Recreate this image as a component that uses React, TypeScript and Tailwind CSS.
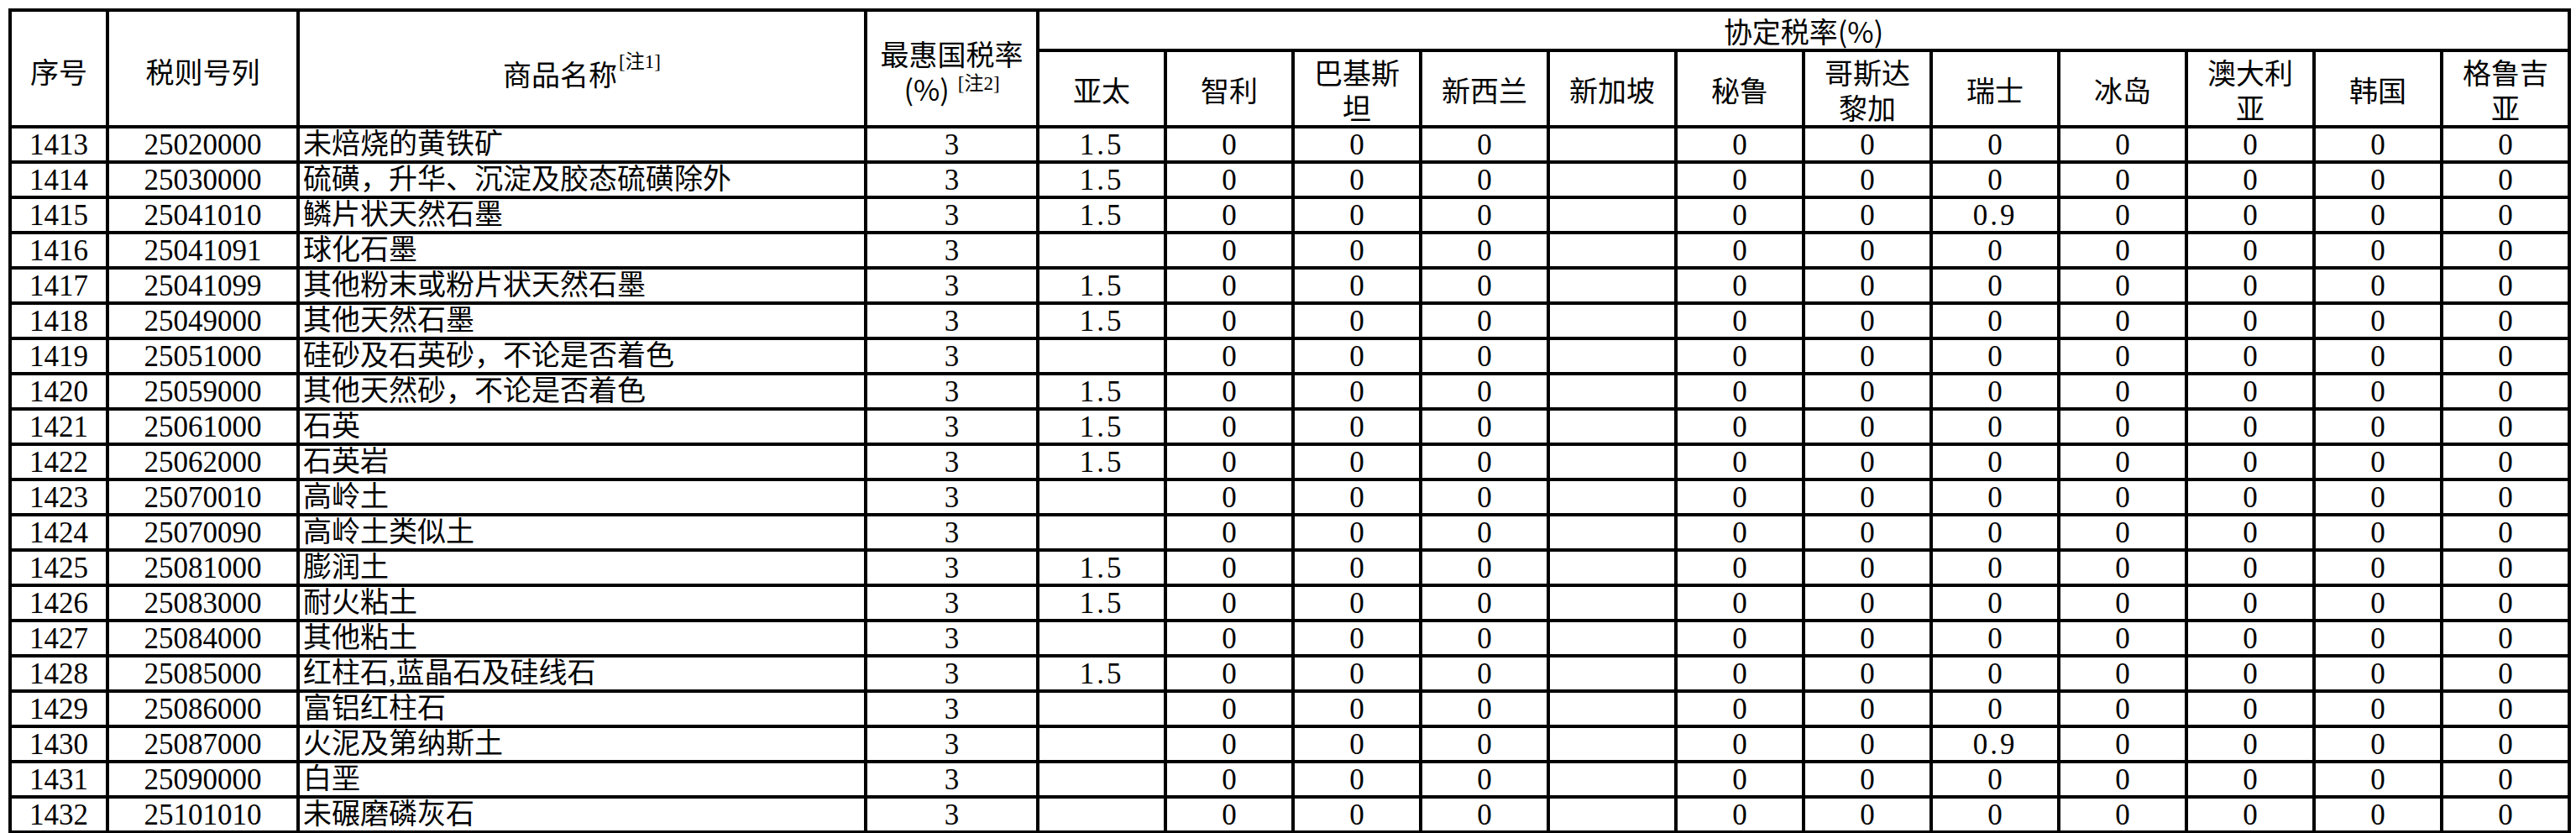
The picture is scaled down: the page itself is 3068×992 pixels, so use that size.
import React from "react";

type Row = {
  no: number;
  code: string;
  name: string;
  apta: string;
  swiss: string;
};

const rows: Row[] = [
  { no: 1413, code: "25020000", name: "未焙烧的黄铁矿", apta: "1.5", swiss: "0" },
  { no: 1414, code: "25030000", name: "硫磺，升华、沉淀及胶态硫磺除外", apta: "1.5", swiss: "0" },
  { no: 1415, code: "25041010", name: "鳞片状天然石墨", apta: "1.5", swiss: "0.9" },
  { no: 1416, code: "25041091", name: "球化石墨", apta: "", swiss: "0" },
  { no: 1417, code: "25041099", name: "其他粉末或粉片状天然石墨", apta: "1.5", swiss: "0" },
  { no: 1418, code: "25049000", name: "其他天然石墨", apta: "1.5", swiss: "0" },
  { no: 1419, code: "25051000", name: "硅砂及石英砂，不论是否着色", apta: "", swiss: "0" },
  { no: 1420, code: "25059000", name: "其他天然砂，不论是否着色", apta: "1.5", swiss: "0" },
  { no: 1421, code: "25061000", name: "石英", apta: "1.5", swiss: "0" },
  { no: 1422, code: "25062000", name: "石英岩", apta: "1.5", swiss: "0" },
  { no: 1423, code: "25070010", name: "高岭土", apta: "", swiss: "0" },
  { no: 1424, code: "25070090", name: "高岭土类似土", apta: "", swiss: "0" },
  { no: 1425, code: "25081000", name: "膨润土", apta: "1.5", swiss: "0" },
  { no: 1426, code: "25083000", name: "耐火粘土", apta: "1.5", swiss: "0" },
  { no: 1427, code: "25084000", name: "其他粘土", apta: "", swiss: "0" },
  { no: 1428, code: "25085000", name: "红柱石,蓝晶石及硅线石", apta: "1.5", swiss: "0" },
  { no: 1429, code: "25086000", name: "富铝红柱石", apta: "", swiss: "0" },
  { no: 1430, code: "25087000", name: "火泥及第纳斯土", apta: "", swiss: "0.9" },
  { no: 1431, code: "25090000", name: "白垩", apta: "", swiss: "0" },
  { no: 1432, code: "25101010", name: "未碾磨磷灰石", apta: "", swiss: "0" },
];

// country headers, a second line where the original wraps
const countries: [string, string?][] = [
  ["亚太"],
  ["智利"],
  ["巴基斯", "坦"],
  ["新西兰"],
  ["新加坡"],
  ["秘鲁"],
  ["哥斯达", "黎加"],
  ["瑞士"],
  ["冰岛"],
  ["澳大利", "亚"],
  ["韩国"],
  ["格鲁吉", "亚"],
];

const th = "border-[4px] border-black p-0 text-center align-middle font-normal";
const td = "border-[4px] border-black p-0 text-center align-middle";
const note =
  "inline-block align-top leading-none text-[23px] font-['Liberation_Serif','Noto_Sans_CJK_SC',serif]";

function Num({ v }: { v: string }) {
  if (v.includes(".")) return <span className="tracking-[3px]">{v}</span>;
  return <>{v}</>;
}

export default function App() {
  const rates = (r: Row) => [r.apta, "0", "0", "0", "", "0", "0", r.swiss, "0", "0", "0", "0"];

  return (
    <div className="min-h-screen bg-white pt-[10px] pl-[10px] text-black">
      <table className="table-fixed border-collapse w-[3052px] font-['Liberation_Serif','Noto_Sans_CJK_SC',serif] text-[35px] leading-none">
        <colgroup>
          <col className="w-[116px]" />
          <col className="w-[227px]" />
          <col className="w-[676px]" />
          <col className="w-[205px]" />
          {countries.map((_, i) => (
            <col key={i} className="w-[152px]" />
          ))}
        </colgroup>
        <thead className="font-['Noto_Sans_CJK_SC',sans-serif] text-[34px]">
          <tr className="h-[48px]">
            <th rowSpan={2} className={th + " pt-[6px]"}>序号</th>
            <th rowSpan={2} className={th + " pt-[6px]"}>税则号列</th>
            <th rowSpan={2} className={th + " pt-[8px]"}>
              <span className="inline-block align-middle">商品名称</span>
              <span className={note + " -mt-[4px] ml-[2px]"}>[注1]</span>
            </th>
            <th rowSpan={2} className={th + " pt-[4px]"}>
              <div className="leading-[44px]">最惠国税率</div>
              <div className="leading-[40px] flex justify-center items-start">
                <span>(%)</span>
                <span className={note + " ml-[10px] mt-[2px]"}>[注2]</span>
              </div>
            </th>
            <th colSpan={12} className={th + " pt-[2px]"}>
              协定税率(%)
            </th>
          </tr>
          <tr className="h-[85px]">
            {countries.map(([a, b], i) => (
              <th key={i} className={th + " pt-[3px] leading-[42px]"}>
                {a}
                {b && (
                  <>
                    <br />
                    {b}
                  </>
                )}
              </th>
            ))}
          </tr>
        </thead>
        <tbody>
          {rows.map((r) => (
            <tr key={r.no} className="h-[42px]">
              <td className={td}>{r.no}</td>
              <td className={td}>{r.code}</td>
              <td className={td + " text-left pl-[4px] text-[34px] whitespace-nowrap"}>{r.name}</td>
              <td className={td}>3</td>
              {rates(r).map((v, i) => (
                <td key={i} className={td}>
                  <Num v={v} />
                </td>
              ))}
            </tr>
          ))}
        </tbody>
      </table>
    </div>
  );
}
